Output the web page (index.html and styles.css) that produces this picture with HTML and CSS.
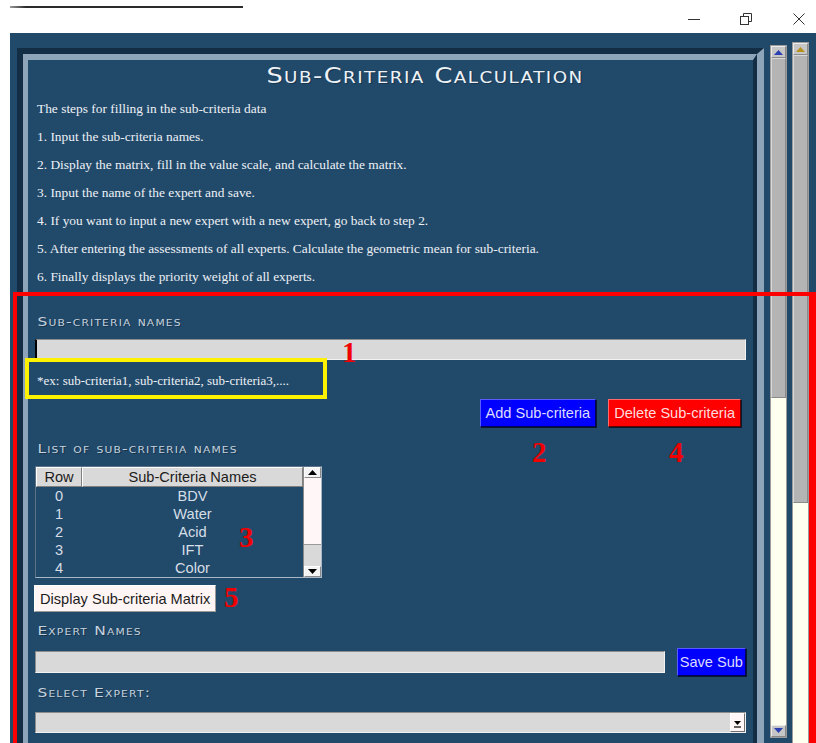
FILE: index.html
```html
<!DOCTYPE html>
<html lang="en">
<head>
<meta charset="utf-8">
<title>Sub-Criteria Calculation</title>
<link rel="stylesheet" href="styles.css">
</head>
<body>
<div class="chrome">
  <div class="chrome-line"></div>
  <div class="win-controls">
    <svg class="win-icon" width="12" height="12" viewBox="0 0 12 12"><path d="M0 6.5H12" stroke="#333" stroke-width="1" fill="none"/></svg>
    <svg class="win-icon" width="12" height="12" viewBox="0 0 12 12"><rect x="0.5" y="3.5" width="8" height="8" stroke="#333" fill="none"/><path d="M3.5 3.5V0.5H11.5V8.5H8.5" stroke="#333" fill="none"/></svg>
    <svg class="win-icon" width="12" height="12" viewBox="0 0 12 12"><path d="M0.5 0.5L11.5 11.5M11.5 0.5L0.5 11.5" stroke="#333" fill="none"/></svg>
  </div>
</div>

<div class="app">
  <div class="panel">
    <div class="panel-inner">
      <h1 class="title"><span class="title-text">Sub-Criteria Calculation</span></h1>
      <div class="steps">
        <p>The steps for filling in the sub-criteria data</p>
        <p>1. Input the sub-criteria names.</p>
        <p>2. Display the matrix, fill in the value scale, and calculate the matrix.</p>
        <p>3. Input the name of the expert and save.</p>
        <p>4. If you want to input a new expert with a new expert, go back to step 2.</p>
        <p>5. After entering the assessments of all experts. Calculate the geometric mean for sub-criteria.</p>
        <p>6. Finally displays the priority weight of all experts.</p>
      </div>

      <div class="label label-first">Sub-criteria names</div>
      <div class="entry entry-cursor"></div>
      <div class="hint">*ex: sub-criteria1, sub-criteria2, sub-criteria3,....</div>

      <div class="btn-row">
        <button class="btn btn-blue">Add Sub-criteria</button>
        <button class="btn btn-red">Delete Sub-criteria</button>
      </div>

      <div class="label label-list">List of sub-criteria names</div>
      <div class="tree">
        <div class="tree-main">
          <div class="tree-head">
            <div class="th th-row">Row</div>
            <div class="th th-name">Sub-Criteria Names</div>
          </div>
          <div class="tr"><span class="td-row">0</span><span class="td-name">BDV</span></div>
          <div class="tr"><span class="td-row">1</span><span class="td-name">Water</span></div>
          <div class="tr"><span class="td-row">2</span><span class="td-name">Acid</span></div>
          <div class="tr"><span class="td-row">3</span><span class="td-name">IFT</span></div>
          <div class="tr"><span class="td-row">4</span><span class="td-name">Color</span></div>
        </div>
        <div class="mini-sbar">
          <div class="mini-arrow"><svg width="9" height="5" viewBox="0 0 9 5"><path d="M0 5L4.5 0L9 5Z" fill="#000"/></svg></div>
          <div class="mini-thumb"></div>
          <div class="mini-trough"></div>
          <div class="mini-arrow"><svg width="9" height="5" viewBox="0 0 9 5"><path d="M0 0L4.5 5L9 0Z" fill="#000"/></svg></div>
        </div>
      </div>

      <button class="btn btn-light">Display Sub-criteria Matrix</button>

      <div class="label label-expert">Expert Names</div>
      <div class="expert-row">
        <div class="entry entry-expert"></div>
        <button class="btn btn-blue btn-save">Save Sub</button>
      </div>

      <div class="label label-select">Select Expert:</div>
      <div class="combo">
        <div class="combo-btn"><svg width="9" height="7" viewBox="0 0 9 7"><path d="M1 0L4.5 4L8 0Z" fill="#000"/><path d="M1 6H8" stroke="#000" stroke-width="1.2"/></svg></div>
      </div>
    </div>
  </div>

  <div class="sbar sbar-1">
    <div class="sbar-arrow"><svg width="11" height="6" viewBox="0 0 11 6"><path d="M1 6L5.5 1L10 6Z" fill="#2b3fb0"/></svg></div>
    <div class="sbar-thumb thumb-1"></div>
    <div class="sbar-track"></div>
    <div class="sbar-arrow sbar-arrow-down"><svg width="11" height="6" viewBox="0 0 11 6"><path d="M1 0L5.5 5L10 0Z" fill="#2b3fb0"/></svg></div>
  </div>
  <div class="sbar sbar-2">
    <div class="sbar-arrow"><svg width="11" height="6" viewBox="0 0 11 6"><path d="M1 6L5.5 1L10 6Z" fill="#b8901c"/></svg></div>
    <div class="sbar-thumb thumb-2"></div>
    <div class="sbar-track"></div>
  </div>
</div>

<div class="mark mark-red"></div>
<div class="mark mark-yellow"></div>
<span class="num n1">1</span>
<span class="num n2">2</span>
<span class="num n3">3</span>
<span class="num n4">4</span>
<span class="num n5">5</span>
</body>
</html>
```

FILE: styles.css
```css
html, body {
  margin: 0;
  padding: 0;
}

body {
  position: relative;
  width: 816px;
  height: 743px;
  overflow: hidden;
  background: #ffffff;
  font-family: "Liberation Sans", Arial, sans-serif;
}

/* window chrome */
.chrome {
  height: 33px;
  display: flex;
  align-items: flex-start;
}

.chrome-line {
  margin: 6px 0 0 10px;
  width: 233px;
  height: 2px;
  background: linear-gradient(to right, #9a9a9a 0, #2b2b2b 16px, #2b2b2b 100%);
}

.win-controls {
  margin: 13px 11px 0 auto;
  display: flex;
  gap: 40px;
}

.win-icon {
  display: block;
}

.win-icon:last-child {
  margin-left: 1px;
}

/* application area */
.app {
  margin-left: 10px;
  height: 710px;
  background: #21496a;
  display: flex;
  align-items: flex-start;
  overflow: hidden;
}

.panel {
  margin: 15px 0 0 7px;
  width: 747px;
  height: 720px;
  box-sizing: border-box;
  border-style: solid;
  border-width: 6px 7px 6px 6px;
  border-color: #132d45 #8ea4b8 #8ea4b8 #132d45;
}

.panel-inner {
  height: 100%;
  box-sizing: border-box;
  border-style: solid;
  border-width: 6px 4px 5px 5px;
  border-color: #8ea4b8 #132d45 #132d45 #8ea4b8;
  padding: 0 7px;
}

.title {
  margin: 0;
  height: 32px;
  line-height: 32px;
  padding-left: 70px;
  text-align: center;
  font-family: "DejaVu Sans", sans-serif;
  font-weight: normal;
  font-size: 21px;
  font-variant: small-caps;
  letter-spacing: 1.2px;
  color: #eef2f6;
  text-shadow: 1px 1px 0 rgba(0, 0, 0, 0.25);
}

/* the heading face is an extended one; widen the letterforms */
.title-text {
  display: inline-block;
  transform: scaleX(1.22);
}

.steps {
  margin-top: 3px;
  padding-left: 2px;
  font-family: "Liberation Serif", "Times New Roman", serif;
  font-size: 13.4px;
  color: #eef1f5;
}

.steps p {
  margin: 0;
  line-height: 28px;
  white-space: nowrap;
}

.label {
  padding-left: 2px;
  line-height: 20px;
  font-family: "DejaVu Sans", sans-serif;
  font-size: 13px;
  font-variant: small-caps;
  letter-spacing: 1px;
  color: #c6d2de;
  text-shadow: 1px 1px 0 rgba(0, 0, 0, 0.3);
  white-space: nowrap;
  transform: scaleX(1.19);
  transform-origin: left center;
}

.label-first { margin-top: 21px; }
.label-list { margin-top: 12px; }
.label-expert { margin-top: 9px; }
.label-select { margin-top: 7px; }

.entry {
  height: 21px;
  box-sizing: border-box;
  background: #d9d9d9;
  border: 1px solid;
  border-color: #8c8c8c #f2f2f2 #f2f2f2 #8c8c8c;
}

.entry-cursor {
  margin-top: 7px;
  border-left: 2px solid #000;
}

.hint {
  margin-top: 11px;
  padding-left: 2px;
  line-height: 20px;
  font-family: "Liberation Serif", "Times New Roman", serif;
  font-size: 13px;
  color: #eef1f5;
}

/* buttons */
.btn {
  height: 28px;
  box-sizing: border-box;
  padding: 0 5px;
  border: 1px solid;
  font-family: "Liberation Sans", Arial, sans-serif;
  font-size: 14.6px;
  line-height: 24px;
  white-space: nowrap;
  cursor: pointer;
}

.btn-blue {
  background: #0000ff;
  color: #dcdcff;
  border-color: #5b5bff #000060 #000060 #5b5bff;
  box-shadow: 1px 1px 0 #0b1a28;
}

.btn-red {
  background: #ff0000;
  color: #ffdcdc;
  border-color: #ff6b6b #600000 #600000 #ff6b6b;
  box-shadow: 1px 1px 0 #0b1a28;
}

.btn-light {
  display: block;
  margin: 7px 0 0 -1px;
  height: 27px;
  padding: 0 5px;
  background: #fff5f5;
  color: #1c1c1c;
  border-color: #ffffff #9a9a9a #9a9a9a #ffffff;
}

.btn-row {
  margin-top: 8px;
  display: flex;
  justify-content: flex-end;
  gap: 12px;
  padding-right: 5px;
}

/* tree view */
.tree {
  margin-top: 7px;
  width: 287px;
  height: 112px;
  box-sizing: border-box;
  display: flex;
  border: 1px solid;
  border-color: #5d7286 #a9b8c6 #a9b8c6 #5d7286;
}

.tree-main {
  flex: 1;
  overflow: hidden;
}

.tree-head {
  display: flex;
  height: 20px;
}

.th {
  box-sizing: border-box;
  background: #d9d9d9;
  border: 1px solid;
  border-color: #ffffff #7f7f7f #7f7f7f #ffffff;
  font-size: 14.6px;
  line-height: 18px;
  color: #1c1c1c;
  text-align: center;
}

.th-row { width: 46px; }
.th-name { flex: 1; }

.tr {
  display: flex;
  height: 18px;
  line-height: 18px;
  font-size: 14.6px;
  color: #d6dee7;
}

.td-row {
  width: 46px;
  text-align: center;
}

.td-name {
  flex: 1;
  text-align: center;
}

.mini-sbar {
  width: 17px;
  display: flex;
  flex-direction: column;
  background: #d9d9d9;
  border-left: 1px solid #8a8a8a;
}

.mini-arrow {
  height: 11px;
  box-sizing: border-box;
  display: flex;
  align-items: center;
  justify-content: center;
  background: #f4f4f4;
  border: 1px solid;
  border-color: #ffffff #8a8a8a #8a8a8a #ffffff;
}

.mini-thumb {
  height: 66px;
  background: #fff7f7;
  border-bottom: 1px solid #9a9a9a;
}

.mini-trough {
  flex: 1;
  background: #d9d9d9;
}

/* expert row */
.expert-row {
  margin-top: 7px;
  height: 28px;
  display: flex;
  align-items: center;
}

.entry-expert {
  width: 632px;
  height: 22px;
}

.btn-save {
  margin-left: 12px;
  padding: 0 2px;
}

.combo {
  margin-top: 9px;
  height: 21px;
  box-sizing: border-box;
  background: #d9d9d9;
  border: 1px solid;
  border-color: #8c8c8c #f2f2f2 #f2f2f2 #8c8c8c;
  display: flex;
  justify-content: flex-end;
}

.combo-btn {
  width: 15px;
  box-sizing: border-box;
  background: #fff7f7;
  border: 1px solid;
  border-color: #ffffff #6f6f6f #6f6f6f #ffffff;
  display: flex;
  align-items: center;
  justify-content: center;
  padding-top: 3px;
}

/* window scrollbars */
.sbar {
  width: 17px;
  box-sizing: border-box;
  display: flex;
  flex-direction: column;
  border: 1px solid #9c9c9c;
  background: #fffff0;
}

.sbar-1 {
  margin: 12px 0 0 6px;
  height: 693px;
}

.sbar-2 {
  margin: 9px 0 0 5px;
  height: 720px;
}

.sbar-arrow {
  height: 12px;
  box-sizing: border-box;
  display: flex;
  align-items: center;
  justify-content: center;
  background: #c6c6c6;
  border: 1px solid;
  border-color: #ececec #8a8a8a #8a8a8a #ececec;
}

.sbar-thumb {
  box-sizing: border-box;
  background: #b4b4b4;
  border: 1px solid;
  border-color: #d8d8d8 #8a8a8a #8a8a8a #d8d8d8;
}

.thumb-1 { height: 340px; }
.thumb-2 { height: 448px; }

.sbar-track {
  flex: 1;
  background: #fffff0;
}

/* annotation overlays */
.mark {
  position: absolute;
  box-sizing: border-box;
}

.mark-red {
  left: 13px;
  top: 292px;
  width: 803px;
  height: 456px;
  border: 4px solid #ff0000;
  border-right-width: 7px;
}

.mark-yellow {
  left: 25px;
  top: 358px;
  width: 302px;
  height: 41px;
  border: 4px solid #fff200;
}

.num {
  position: absolute;
  font-family: "Liberation Serif", "Times New Roman", serif;
  font-weight: 700;
  font-size: 29px;
  line-height: 28px;
  color: #f00000;
}

.n1 { left: 342px; top: 338px; }
.n2 { left: 532px; top: 438px; }
.n3 { left: 239px; top: 523px; }
.n4 { left: 669px; top: 438px; }
.n5 { left: 224px; top: 583px; }
```
